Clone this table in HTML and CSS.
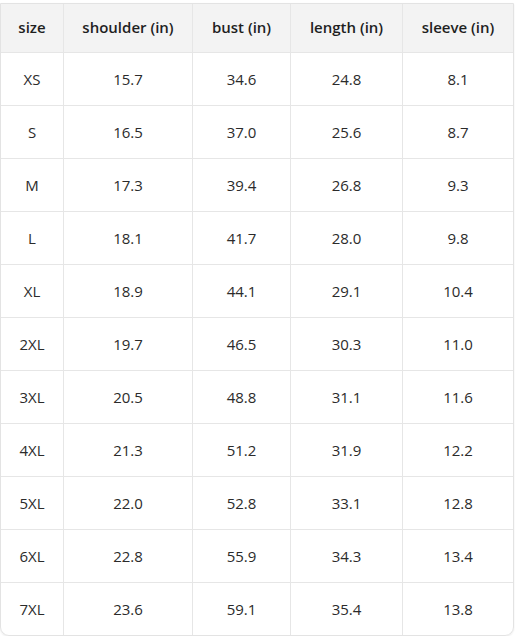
FILE: index.html
```html
<!DOCTYPE html>
<html>
<head>
<meta charset="utf-8">
<link rel="stylesheet" href="styles.css">
</head>
<body>
<div class="wrap">
<table class="size-table">
<colgroup>
<col class="c1"><col class="c2"><col class="c3"><col class="c4"><col class="c5">
</colgroup>
<thead>
<tr><th>size</th><th>shoulder (in)</th><th>bust (in)</th><th>length (in)</th><th>sleeve (in)</th></tr>
</thead>
<tbody>
<tr><td>XS</td><td>15.7</td><td>34.6</td><td>24.8</td><td>8.1</td></tr>
<tr><td>S</td><td>16.5</td><td>37.0</td><td>25.6</td><td>8.7</td></tr>
<tr><td>M</td><td>17.3</td><td>39.4</td><td>26.8</td><td>9.3</td></tr>
<tr><td>L</td><td>18.1</td><td>41.7</td><td>28.0</td><td>9.8</td></tr>
<tr><td>XL</td><td>18.9</td><td>44.1</td><td>29.1</td><td>10.4</td></tr>
<tr><td>2XL</td><td>19.7</td><td>46.5</td><td>30.3</td><td>11.0</td></tr>
<tr><td>3XL</td><td>20.5</td><td>48.8</td><td>31.1</td><td>11.6</td></tr>
<tr><td>4XL</td><td>21.3</td><td>51.2</td><td>31.9</td><td>12.2</td></tr>
<tr><td>5XL</td><td>22.0</td><td>52.8</td><td>33.1</td><td>12.8</td></tr>
<tr><td>6XL</td><td>22.8</td><td>55.9</td><td>34.3</td><td>13.4</td></tr>
<tr><td>7XL</td><td>23.6</td><td>59.1</td><td>35.4</td><td>13.8</td></tr>
</tbody>
</table>
</div>
</body>
</html>
```

FILE: styles.css
```css
html, body {
  margin: 0;
  padding: 0;
  background: #ffffff;
}
.wrap {
  padding: 3px 0 0 0;
  width: 512px;
}
.size-table {
  width: 512px;
  border-collapse: separate;
  border-spacing: 0;
  table-layout: fixed;
  font-family: "Open Sans", "Noto Sans", sans-serif;
  font-size: 15px;
  color: #2b2b2b;
  border: 1px solid #e3e3e3;
  border-radius: 0 0 9px 9px;
  box-shadow: 0 1px 2px rgba(0,0,0,0.08);
  overflow: hidden;
}
.c1 { width: 63px; }
.c2 { width: 129px; }
.c3 { width: 98px; }
.c4 { width: 112px; }
.c5 { width: 110px; }
.size-table th,
.size-table td {
  text-align: center;
  padding: 0;
  border-right: 1px solid #e6e6e6;
  border-bottom: 1px solid #e6e6e6;
}
.size-table th:last-child,
.size-table td:last-child {
  border-right: none;
}
.size-table tbody tr:last-child td {
  border-bottom: none;
}
.size-table th {
  height: 46px;
  padding-bottom: 2px;
  background: #f3f3f3;
  font-weight: 600;
  color: #1f1f1f;
}
.size-table td {
  height: 52px;
}
```
